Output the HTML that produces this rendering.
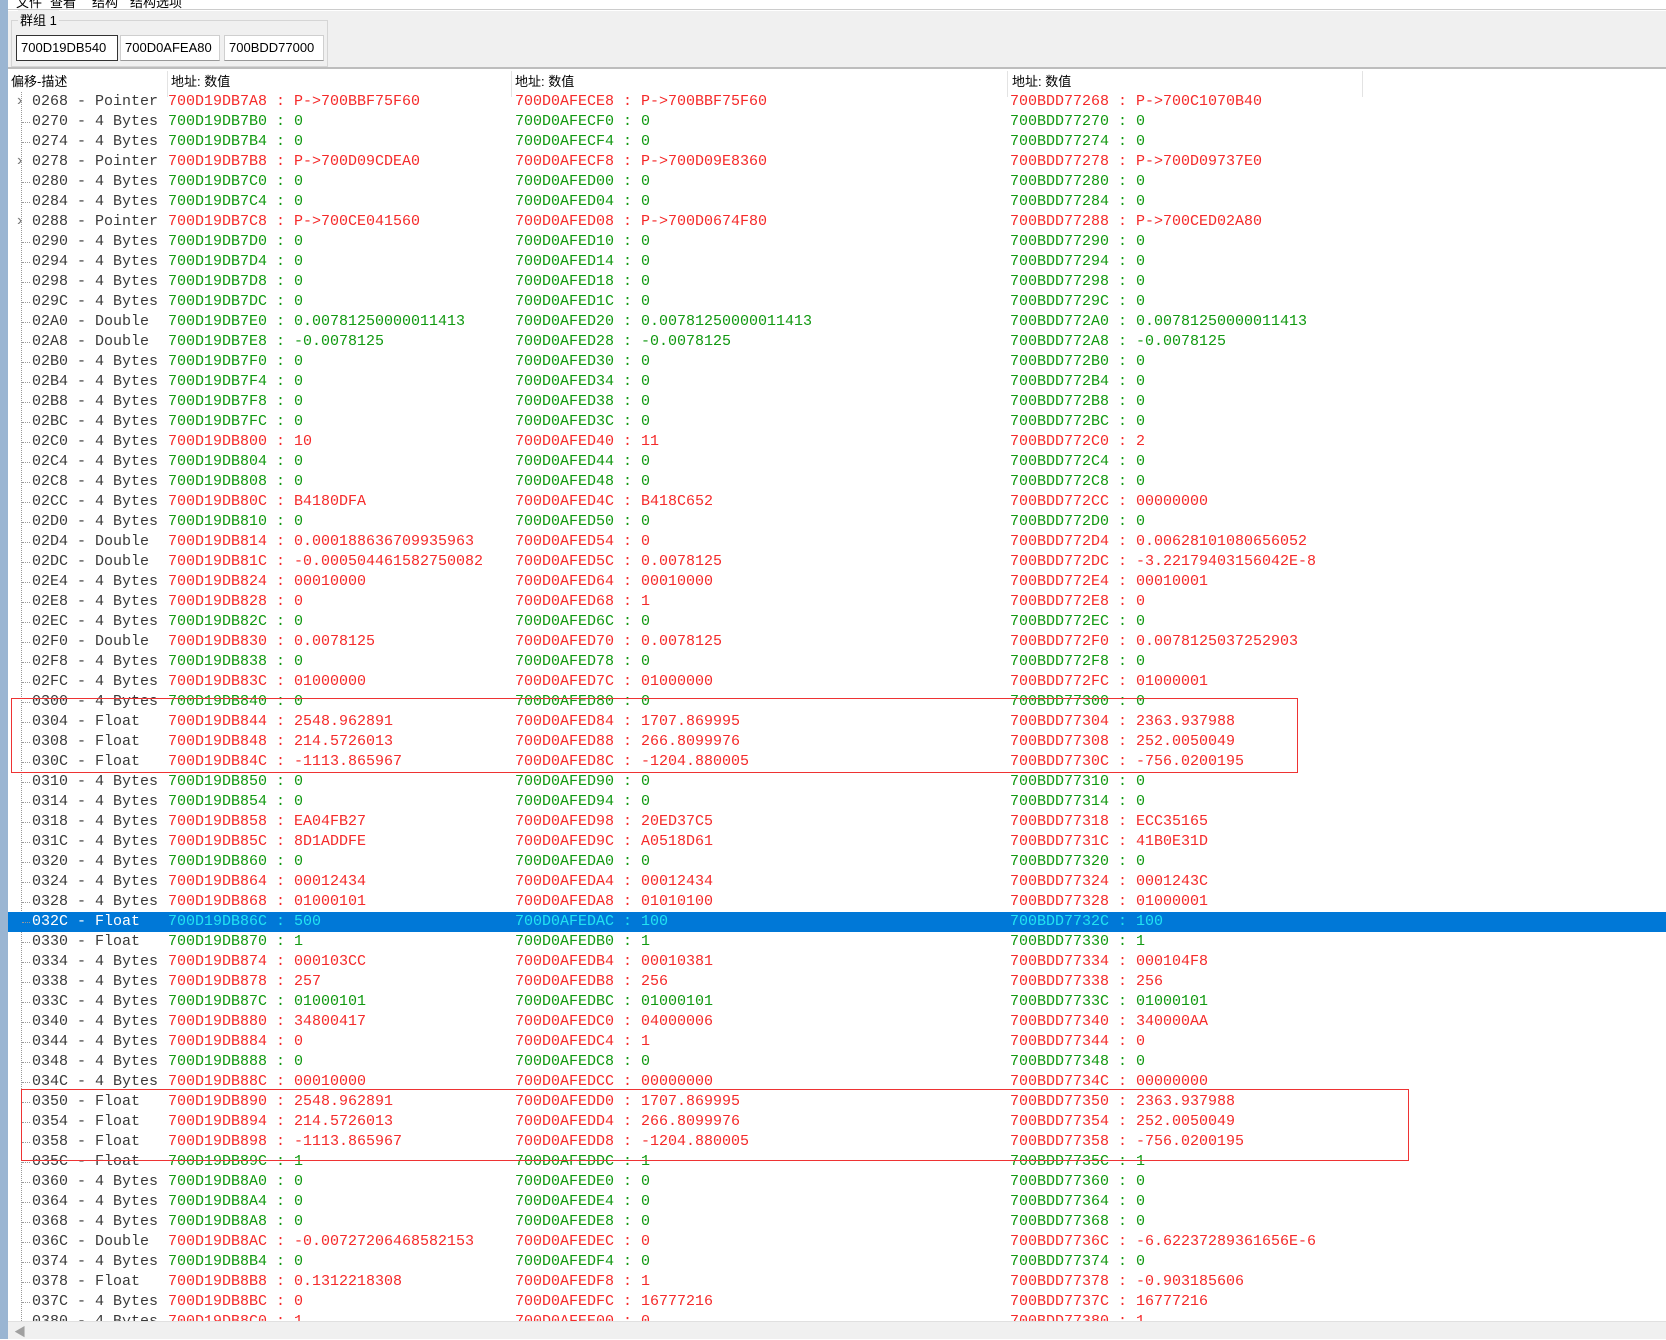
<!DOCTYPE html>
<html><head><meta charset="utf-8"><style>
*{margin:0;padding:0;box-sizing:border-box}
body{width:1666px;height:1339px;position:relative;overflow:hidden;background:#fff;font-family:"Liberation Sans","Noto Sans CJK SC",sans-serif}
#strip{position:absolute;left:0;top:0;width:8px;height:1339px;background:#9ab5d2}
#menu{position:absolute;left:8px;top:0;right:0;height:10px;background:#fff;border-bottom:1px solid #ccc;font-size:13px;overflow:hidden}
#menu span{position:absolute;top:-8px}
#top{position:absolute;left:8px;top:11px;right:0;height:58px;background:#f0f0f0;border-bottom:2px solid #bdbdbd}
#grp{position:absolute;left:3px;top:9px;width:317px;height:47px;border:1px solid #d5d5d5}
#grp .lbl{position:absolute;left:6px;top:-11px;background:#f0f0f0;padding:0 2px;font-size:13px;color:#000}
.fld{position:absolute;top:14px;height:26px;background:#fff;border:1px solid #cfcfcf;border-bottom-color:#999;font-size:13px;padding:4px 0 0 4px}
#hdr{position:absolute;left:8px;top:71px;right:0;height:26px;background:#fff;font-size:13px}
#hdr span{position:absolute;top:0px}
#hdr i{position:absolute;top:0;width:1px;height:26px;background:#e3e3e3}
#list{position:absolute;left:8px;top:92px;right:0;height:1229px;overflow:hidden}
.r{position:absolute;left:0;right:0;height:20px;font-family:"Liberation Mono",monospace;font-size:15px;line-height:20px;white-space:pre}
.r span{position:absolute;top:0}
.a{left:24px;color:#3a3a3a}
.b{left:160px}.c{left:507px}.d{left:1002px}
.R span.b,.R span.c,.R span.d{color:#f52a2a}
.G span.b,.G span.c,.G span.d{color:#119911}
.S{background:#0078d7}
.S .a{color:#fff}.S span.b,.S span.c,.S span.d{color:#22e3f2}
.P .a::before{content:"›";position:absolute;left-15px;top:-1px;color:#777;font-family:"Liberation Sans",sans-serif;font-size:16px}
.P .a::before{left:-15px}
.r::after{content:"";position:absolute;left:14px;top:10px;width:8px;border-top:1px dotted #999}
.P::after{display:none}
#vline{position:absolute;left:21px;top:92px;width:0;height:1229px;border-left:1px dotted #999}
.box{position:absolute;border:1px solid #e33}
#sb{position:absolute;left:8px;top:1321px;right:0;height:18px;background:#f0f0f0;border-top:1px solid #e0e0e0}
#sb span{position:absolute;left:6px;top:1px;color:#a0a0a0;font-size:12px}
</style></head><body>
<div id="strip"></div>
<div id="menu"><span style="left:8px">文件</span><span style="left:42px">查看</span><span style="left:84px">结构</span><span style="left:122px">结构选项</span></div>
<div id="top"><div id="grp"><span class="lbl">群组 1</span>
<div class="fld" style="left:4px;width:102px;border:1px solid #333">700D19DB540</div>
<div class="fld" style="left:108px;width:100px">700D0AFEA80</div>
<div class="fld" style="left:212px;width:100px">700BDD77000</div></div></div>
<div id="hdr"><span style="left:3px">偏移-描述</span><i style="left:159px"></i><span style="left:163px">地址: 数值</span><i style="left:503px"></i><span style="left:507px">地址: 数值</span><i style="left:999px"></i><span style="left:1004px">地址: 数值</span><i style="left:1354px"></i></div>
<div id="vline"></div>
<div id="list">
<div class="r R P" style="top:0px"><span class="a">0268 - Pointer</span><span class="b">700D19DB7A8 : P->700BBF75F60</span><span class="c">700D0AFECE8 : P->700BBF75F60</span><span class="d">700BDD77268 : P->700C1070B40</span></div>
<div class="r G" style="top:20px"><span class="a">0270 - 4 Bytes</span><span class="b">700D19DB7B0 : 0</span><span class="c">700D0AFECF0 : 0</span><span class="d">700BDD77270 : 0</span></div>
<div class="r G" style="top:40px"><span class="a">0274 - 4 Bytes</span><span class="b">700D19DB7B4 : 0</span><span class="c">700D0AFECF4 : 0</span><span class="d">700BDD77274 : 0</span></div>
<div class="r R P" style="top:60px"><span class="a">0278 - Pointer</span><span class="b">700D19DB7B8 : P->700D09CDEA0</span><span class="c">700D0AFECF8 : P->700D09E8360</span><span class="d">700BDD77278 : P->700D09737E0</span></div>
<div class="r G" style="top:80px"><span class="a">0280 - 4 Bytes</span><span class="b">700D19DB7C0 : 0</span><span class="c">700D0AFED00 : 0</span><span class="d">700BDD77280 : 0</span></div>
<div class="r G" style="top:100px"><span class="a">0284 - 4 Bytes</span><span class="b">700D19DB7C4 : 0</span><span class="c">700D0AFED04 : 0</span><span class="d">700BDD77284 : 0</span></div>
<div class="r R P" style="top:120px"><span class="a">0288 - Pointer</span><span class="b">700D19DB7C8 : P->700CE041560</span><span class="c">700D0AFED08 : P->700D0674F80</span><span class="d">700BDD77288 : P->700CED02A80</span></div>
<div class="r G" style="top:140px"><span class="a">0290 - 4 Bytes</span><span class="b">700D19DB7D0 : 0</span><span class="c">700D0AFED10 : 0</span><span class="d">700BDD77290 : 0</span></div>
<div class="r G" style="top:160px"><span class="a">0294 - 4 Bytes</span><span class="b">700D19DB7D4 : 0</span><span class="c">700D0AFED14 : 0</span><span class="d">700BDD77294 : 0</span></div>
<div class="r G" style="top:180px"><span class="a">0298 - 4 Bytes</span><span class="b">700D19DB7D8 : 0</span><span class="c">700D0AFED18 : 0</span><span class="d">700BDD77298 : 0</span></div>
<div class="r G" style="top:200px"><span class="a">029C - 4 Bytes</span><span class="b">700D19DB7DC : 0</span><span class="c">700D0AFED1C : 0</span><span class="d">700BDD7729C : 0</span></div>
<div class="r G" style="top:220px"><span class="a">02A0 - Double</span><span class="b">700D19DB7E0 : 0.00781250000011413</span><span class="c">700D0AFED20 : 0.00781250000011413</span><span class="d">700BDD772A0 : 0.00781250000011413</span></div>
<div class="r G" style="top:240px"><span class="a">02A8 - Double</span><span class="b">700D19DB7E8 : -0.0078125</span><span class="c">700D0AFED28 : -0.0078125</span><span class="d">700BDD772A8 : -0.0078125</span></div>
<div class="r G" style="top:260px"><span class="a">02B0 - 4 Bytes</span><span class="b">700D19DB7F0 : 0</span><span class="c">700D0AFED30 : 0</span><span class="d">700BDD772B0 : 0</span></div>
<div class="r G" style="top:280px"><span class="a">02B4 - 4 Bytes</span><span class="b">700D19DB7F4 : 0</span><span class="c">700D0AFED34 : 0</span><span class="d">700BDD772B4 : 0</span></div>
<div class="r G" style="top:300px"><span class="a">02B8 - 4 Bytes</span><span class="b">700D19DB7F8 : 0</span><span class="c">700D0AFED38 : 0</span><span class="d">700BDD772B8 : 0</span></div>
<div class="r G" style="top:320px"><span class="a">02BC - 4 Bytes</span><span class="b">700D19DB7FC : 0</span><span class="c">700D0AFED3C : 0</span><span class="d">700BDD772BC : 0</span></div>
<div class="r R" style="top:340px"><span class="a">02C0 - 4 Bytes</span><span class="b">700D19DB800 : 10</span><span class="c">700D0AFED40 : 11</span><span class="d">700BDD772C0 : 2</span></div>
<div class="r G" style="top:360px"><span class="a">02C4 - 4 Bytes</span><span class="b">700D19DB804 : 0</span><span class="c">700D0AFED44 : 0</span><span class="d">700BDD772C4 : 0</span></div>
<div class="r G" style="top:380px"><span class="a">02C8 - 4 Bytes</span><span class="b">700D19DB808 : 0</span><span class="c">700D0AFED48 : 0</span><span class="d">700BDD772C8 : 0</span></div>
<div class="r R" style="top:400px"><span class="a">02CC - 4 Bytes</span><span class="b">700D19DB80C : B4180DFA</span><span class="c">700D0AFED4C : B418C652</span><span class="d">700BDD772CC : 00000000</span></div>
<div class="r G" style="top:420px"><span class="a">02D0 - 4 Bytes</span><span class="b">700D19DB810 : 0</span><span class="c">700D0AFED50 : 0</span><span class="d">700BDD772D0 : 0</span></div>
<div class="r R" style="top:440px"><span class="a">02D4 - Double</span><span class="b">700D19DB814 : 0.000188636709935963</span><span class="c">700D0AFED54 : 0</span><span class="d">700BDD772D4 : 0.00628101080656052</span></div>
<div class="r R" style="top:460px"><span class="a">02DC - Double</span><span class="b">700D19DB81C : -0.000504461582750082</span><span class="c">700D0AFED5C : 0.0078125</span><span class="d">700BDD772DC : -3.22179403156042E-8</span></div>
<div class="r R" style="top:480px"><span class="a">02E4 - 4 Bytes</span><span class="b">700D19DB824 : 00010000</span><span class="c">700D0AFED64 : 00010000</span><span class="d">700BDD772E4 : 00010001</span></div>
<div class="r R" style="top:500px"><span class="a">02E8 - 4 Bytes</span><span class="b">700D19DB828 : 0</span><span class="c">700D0AFED68 : 1</span><span class="d">700BDD772E8 : 0</span></div>
<div class="r G" style="top:520px"><span class="a">02EC - 4 Bytes</span><span class="b">700D19DB82C : 0</span><span class="c">700D0AFED6C : 0</span><span class="d">700BDD772EC : 0</span></div>
<div class="r R" style="top:540px"><span class="a">02F0 - Double</span><span class="b">700D19DB830 : 0.0078125</span><span class="c">700D0AFED70 : 0.0078125</span><span class="d">700BDD772F0 : 0.0078125037252903</span></div>
<div class="r G" style="top:560px"><span class="a">02F8 - 4 Bytes</span><span class="b">700D19DB838 : 0</span><span class="c">700D0AFED78 : 0</span><span class="d">700BDD772F8 : 0</span></div>
<div class="r R" style="top:580px"><span class="a">02FC - 4 Bytes</span><span class="b">700D19DB83C : 01000000</span><span class="c">700D0AFED7C : 01000000</span><span class="d">700BDD772FC : 01000001</span></div>
<div class="r G" style="top:600px"><span class="a">0300 - 4 Bytes</span><span class="b">700D19DB840 : 0</span><span class="c">700D0AFED80 : 0</span><span class="d">700BDD77300 : 0</span></div>
<div class="r R" style="top:620px"><span class="a">0304 - Float</span><span class="b">700D19DB844 : 2548.962891</span><span class="c">700D0AFED84 : 1707.869995</span><span class="d">700BDD77304 : 2363.937988</span></div>
<div class="r R" style="top:640px"><span class="a">0308 - Float</span><span class="b">700D19DB848 : 214.5726013</span><span class="c">700D0AFED88 : 266.8099976</span><span class="d">700BDD77308 : 252.0050049</span></div>
<div class="r R" style="top:660px"><span class="a">030C - Float</span><span class="b">700D19DB84C : -1113.865967</span><span class="c">700D0AFED8C : -1204.880005</span><span class="d">700BDD7730C : -756.0200195</span></div>
<div class="r G" style="top:680px"><span class="a">0310 - 4 Bytes</span><span class="b">700D19DB850 : 0</span><span class="c">700D0AFED90 : 0</span><span class="d">700BDD77310 : 0</span></div>
<div class="r G" style="top:700px"><span class="a">0314 - 4 Bytes</span><span class="b">700D19DB854 : 0</span><span class="c">700D0AFED94 : 0</span><span class="d">700BDD77314 : 0</span></div>
<div class="r R" style="top:720px"><span class="a">0318 - 4 Bytes</span><span class="b">700D19DB858 : EA04FB27</span><span class="c">700D0AFED98 : 20ED37C5</span><span class="d">700BDD77318 : ECC35165</span></div>
<div class="r R" style="top:740px"><span class="a">031C - 4 Bytes</span><span class="b">700D19DB85C : 8D1ADDFE</span><span class="c">700D0AFED9C : A0518D61</span><span class="d">700BDD7731C : 41B0E31D</span></div>
<div class="r G" style="top:760px"><span class="a">0320 - 4 Bytes</span><span class="b">700D19DB860 : 0</span><span class="c">700D0AFEDA0 : 0</span><span class="d">700BDD77320 : 0</span></div>
<div class="r R" style="top:780px"><span class="a">0324 - 4 Bytes</span><span class="b">700D19DB864 : 00012434</span><span class="c">700D0AFEDA4 : 00012434</span><span class="d">700BDD77324 : 0001243C</span></div>
<div class="r R" style="top:800px"><span class="a">0328 - 4 Bytes</span><span class="b">700D19DB868 : 01000101</span><span class="c">700D0AFEDA8 : 01010100</span><span class="d">700BDD77328 : 01000001</span></div>
<div class="r S" style="top:820px"><span class="a">032C - Float</span><span class="b">700D19DB86C : 500</span><span class="c">700D0AFEDAC : 100</span><span class="d">700BDD7732C : 100</span></div>
<div class="r G" style="top:840px"><span class="a">0330 - Float</span><span class="b">700D19DB870 : 1</span><span class="c">700D0AFEDB0 : 1</span><span class="d">700BDD77330 : 1</span></div>
<div class="r R" style="top:860px"><span class="a">0334 - 4 Bytes</span><span class="b">700D19DB874 : 000103CC</span><span class="c">700D0AFEDB4 : 00010381</span><span class="d">700BDD77334 : 000104F8</span></div>
<div class="r R" style="top:880px"><span class="a">0338 - 4 Bytes</span><span class="b">700D19DB878 : 257</span><span class="c">700D0AFEDB8 : 256</span><span class="d">700BDD77338 : 256</span></div>
<div class="r G" style="top:900px"><span class="a">033C - 4 Bytes</span><span class="b">700D19DB87C : 01000101</span><span class="c">700D0AFEDBC : 01000101</span><span class="d">700BDD7733C : 01000101</span></div>
<div class="r R" style="top:920px"><span class="a">0340 - 4 Bytes</span><span class="b">700D19DB880 : 34800417</span><span class="c">700D0AFEDC0 : 04000006</span><span class="d">700BDD77340 : 340000AA</span></div>
<div class="r R" style="top:940px"><span class="a">0344 - 4 Bytes</span><span class="b">700D19DB884 : 0</span><span class="c">700D0AFEDC4 : 1</span><span class="d">700BDD77344 : 0</span></div>
<div class="r G" style="top:960px"><span class="a">0348 - 4 Bytes</span><span class="b">700D19DB888 : 0</span><span class="c">700D0AFEDC8 : 0</span><span class="d">700BDD77348 : 0</span></div>
<div class="r R" style="top:980px"><span class="a">034C - 4 Bytes</span><span class="b">700D19DB88C : 00010000</span><span class="c">700D0AFEDCC : 00000000</span><span class="d">700BDD7734C : 00000000</span></div>
<div class="r R" style="top:1000px"><span class="a">0350 - Float</span><span class="b">700D19DB890 : 2548.962891</span><span class="c">700D0AFEDD0 : 1707.869995</span><span class="d">700BDD77350 : 2363.937988</span></div>
<div class="r R" style="top:1020px"><span class="a">0354 - Float</span><span class="b">700D19DB894 : 214.5726013</span><span class="c">700D0AFEDD4 : 266.8099976</span><span class="d">700BDD77354 : 252.0050049</span></div>
<div class="r R" style="top:1040px"><span class="a">0358 - Float</span><span class="b">700D19DB898 : -1113.865967</span><span class="c">700D0AFEDD8 : -1204.880005</span><span class="d">700BDD77358 : -756.0200195</span></div>
<div class="r G" style="top:1060px"><span class="a">035C - Float</span><span class="b">700D19DB89C : 1</span><span class="c">700D0AFEDDC : 1</span><span class="d">700BDD7735C : 1</span></div>
<div class="r G" style="top:1080px"><span class="a">0360 - 4 Bytes</span><span class="b">700D19DB8A0 : 0</span><span class="c">700D0AFEDE0 : 0</span><span class="d">700BDD77360 : 0</span></div>
<div class="r G" style="top:1100px"><span class="a">0364 - 4 Bytes</span><span class="b">700D19DB8A4 : 0</span><span class="c">700D0AFEDE4 : 0</span><span class="d">700BDD77364 : 0</span></div>
<div class="r G" style="top:1120px"><span class="a">0368 - 4 Bytes</span><span class="b">700D19DB8A8 : 0</span><span class="c">700D0AFEDE8 : 0</span><span class="d">700BDD77368 : 0</span></div>
<div class="r R" style="top:1140px"><span class="a">036C - Double</span><span class="b">700D19DB8AC : -0.00727206468582153</span><span class="c">700D0AFEDEC : 0</span><span class="d">700BDD7736C : -6.62237289361656E-6</span></div>
<div class="r G" style="top:1160px"><span class="a">0374 - 4 Bytes</span><span class="b">700D19DB8B4 : 0</span><span class="c">700D0AFEDF4 : 0</span><span class="d">700BDD77374 : 0</span></div>
<div class="r R" style="top:1180px"><span class="a">0378 - Float</span><span class="b">700D19DB8B8 : 0.1312218308</span><span class="c">700D0AFEDF8 : 1</span><span class="d">700BDD77378 : -0.903185606</span></div>
<div class="r R" style="top:1200px"><span class="a">037C - 4 Bytes</span><span class="b">700D19DB8BC : 0</span><span class="c">700D0AFEDFC : 16777216</span><span class="d">700BDD7737C : 16777216</span></div>
<div class="r R" style="top:1220px"><span class="a">0380 - 4 Bytes</span><span class="b">700D19DB8C0 : 1</span><span class="c">700D0AFEE00 : 0</span><span class="d">700BDD77380 : 1</span></div>
</div>
<div class="box" style="left:11px;top:698px;width:1287px;height:75px"></div>
<div class="box" style="left:21px;top:1089px;width:1388px;height:72px"></div>
<div id="sb"><span>◀</span></div>
</body></html>
